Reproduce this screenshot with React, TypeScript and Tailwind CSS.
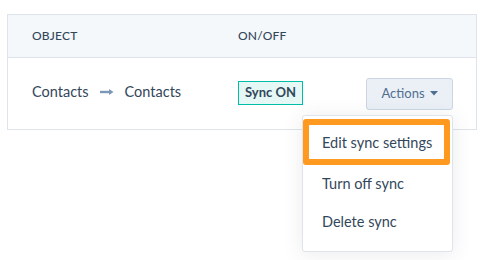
import React from "react";

const Arrow = () => (
    <svg width="14" height="8" viewBox="0 0 14 8" className="mx-[11px]">
        <line x1="0" y1="4" x2="10" y2="4" stroke="#7c98b6" strokeWidth="2.4" />
        <path d="M9 1 L13.5 4 L9 7 Z" fill="#7c98b6" />
    </svg>
);

const Caret = () => (
    <svg width="8" height="5" viewBox="0 0 8 5" className="ml-[5px]">
        <path d="M0 0 L8 0 L4 4.5 Z" fill="#506e91" />
    </svg>
);

const App = () => {
    return (
        <div
            className="w-[484px] h-[260px] bg-white pt-[14px] pl-[7px] text-[#33475b]"
            style={{ fontFamily: "Lato, 'Open Sans', sans-serif" }}
        >
            <div className="w-[470px] border border-[#dfe3eb]">
                <div className="flex items-center h-[43px] bg-[#f5f8fa] border-b border-[#dfe3eb] text-[12px] font-medium tracking-[0.2px]">
                    <div className="w-[230px] pl-[24px]">OBJECT</div>
                    <div>ON/OFF</div>
                </div>
                <div className="flex items-center h-[71px] pb-[3px]">
                    <div className="w-[230px] pl-[24px] flex items-center text-[14.5px]">
                        <span>Contacts</span>
                        <Arrow />
                        <span>Contacts</span>
                    </div>
                    <div className="flex-1">
                        <span className="inline-flex items-center h-[24px] px-[6px] border border-[#00bda5] bg-[#e5f8f6] text-[13px] font-bold">
                            Sync ON
                        </span>
                    </div>
                    <div className="relative pr-[23px] pt-[3px]">
                        <button className="flex items-center h-[32px] w-[87px] justify-center rounded-[3px] border border-[#cbd6e2] bg-[#eaf0f6] text-[13px] text-[#506e91]">
                            Actions
                            <Caret />
                        </button>
                        <div className="absolute top-[40px] right-[23px] w-[151px] bg-white border border-[#dfe3eb] rounded-[3px] shadow-[0_2px_20px_rgba(45,62,80,0.10)] pt-[3px] pb-[10px] text-[14.5px]">
                            <div className="mr-[2px] h-[46px] border-[6px] border-[#ff991f] rounded-[3px] flex items-center pl-[13px] pt-[3px]">
                                Edit sync settings
                            </div>
                            <div className="h-[38px] flex items-center pl-[19px]">Turn off sync</div>
                            <div className="h-[38px] flex items-center pl-[19px]">Delete sync</div>
                        </div>
                    </div>
                </div>
            </div>
        </div>
    );
};

export default App;
